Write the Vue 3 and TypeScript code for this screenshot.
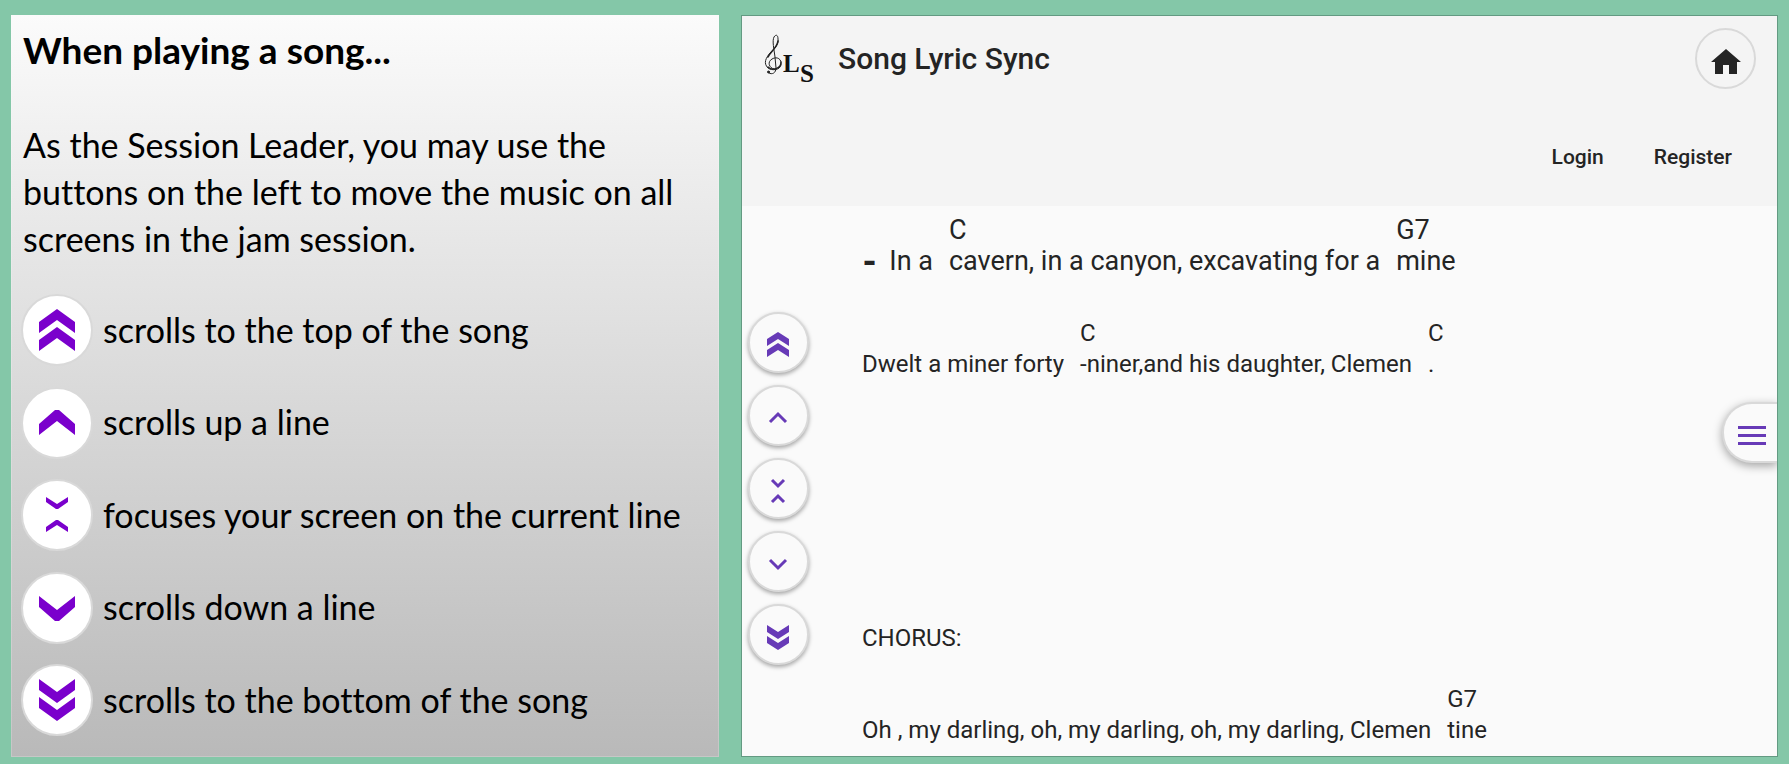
<script setup lang="ts">
interface Control {
  id: string
  label: string
  large: string
  small: string
  thin: boolean
}

interface Segment {
  chord?: string
  text: string
}

interface Line {
  id: string
  kind: string
  segments: Segment[]
}

const controls: Control[] = [
  {
    id: 'top',
    label: 'scrolls to the top of the song',
    large: 'M0-21 18-8V3L0-10-18 3V-8ZM0-3 18 10V21L0 8-18 21V10Z',
    small: 'M0-10 11-3V4L0-3-11 4V-3ZM0 1 11 8V15L0 8-11 15V8Z',
    thin: false,
  },
  {
    id: 'up',
    label: 'scrolls up a line',
    large: 'M-2-13H2L18 1V12L0-2-18 12V1Z',
    small: 'M-8 7 0-1 8 7',
    thin: true,
  },
  {
    id: 'focus',
    label: 'focuses your screen on the current line',
    large: 'M-11-18 0-11 11-18V-13L1-6H-1L-11-13ZM-1 5H1L11 12V17L0 10-11 17V12Z',
    small: 'M-6-8 0-2 6-8M-6 14 0 8 6 14',
    thin: true,
  },
  {
    id: 'down',
    label: 'scrolls down a line',
    large: 'M-18-12 0 2 18-12V-1L2 13H-2L-18-1Z',
    small: 'M-8-1 0 7 8-1',
    thin: true,
  },
  {
    id: 'bottom',
    label: 'scrolls to the bottom of the song',
    large: 'M-18-21 0-8 18-21V-10L0 3-18-10ZM-18-3 0 10 18-3V8L0 21-18 8Z',
    small: 'M-11-9 0-2 11-9V-2L0 5-11-2ZM-11 2 0 9 11 2V9L0 16-11 9Z',
    thin: false,
  },
]

const lines: Line[] = [
  {
    id: 'cavern',
    kind: 'current',
    segments: [
      { text: 'In a' },
      { chord: 'C', text: 'cavern, in a canyon, excavating for a' },
      { chord: 'G7', text: 'mine' },
    ],
  },
  {
    id: 'miner',
    kind: 'verse',
    segments: [
      { text: 'Dwelt a miner forty' },
      { chord: 'C', text: '-niner,and his daughter, Clemen' },
      { chord: 'C', text: '.' },
    ],
  },
  { id: 'chorus', kind: 'section', segments: [{ text: 'CHORUS:' }] },
  {
    id: 'darling',
    kind: 'verse',
    segments: [
      { text: 'Oh , my darling, oh, my darling, oh, my darling, Clemen' },
      { chord: 'G7', text: 'tine' },
    ],
  },
]
</script>

<template>
  <div class="page">
    <section class="guide">
      <h1>When playing a song...</h1>
      <p class="intro">
        As the Session Leader, you may use the buttons on the left to move the music on all screens in the jam session.
      </p>
      <ul class="legend">
        <li v-for="c in controls" :key="c.id">
          <span class="badge">
            <svg viewBox="-34 -34 68 68" aria-hidden="true"><path :d="c.large" /></svg>
          </span>
          <span>{{ c.label }}</span>
        </li>
      </ul>
    </section>

    <section class="player">
      <header>
        <div class="brand-row">
          <a class="brand" href="#">
            <svg class="logo" viewBox="0 0 54 60" aria-hidden="true">
              <g fill="none" stroke="#222" stroke-linecap="round" transform="translate(1 3)">
                <path stroke-width="1" d="M10 37C5 36 3 30 8 27C13 24 18 27 17 33C16 38 8 39 4 36C-1 31 2 26 6 21C10 17 15 13 14 7C14 3 12 2 10 5C8 9 10 17 11 25L12 36C12 41 8 43 5 41" />
                <path stroke-width="1.6" d="M4 25C7 19 13 16 14 9" />
                <path stroke-width="1.3" d="M17 30C17 37 8 39 4 35" />
                <circle cx="4.500" cy="40" r="1" fill="#222" />
              </g>
              <text x="20" y="43">L</text>
              <text x="37" y="53">S</text>
            </svg>
            <span>Song Lyric Sync</span>
          </a>
          <button class="round home" type="button" aria-label="Home">
            <svg viewBox="-29 -29 57 57" aria-hidden="true">
              <path d="M0-10 15 3H11V15H3V6H-3V15H-11V3H-15Z" />
            </svg>
          </button>
        </div>
        <nav class="account">
          <a href="#">Login</a>
          <a href="#">Register</a>
        </nav>
      </header>

      <div class="stage">
        <div class="scroller">
          <button v-for="c in controls" :key="c.id" class="round" type="button" :aria-label="c.label">
            <svg viewBox="-28 -28 57 57" aria-hidden="true">
              <path :class="{ thin: c.thin }" :d="c.small" />
            </svg>
          </button>
        </div>
        <div class="lyrics">
          <div v-for="line in lines" :key="line.id" class="line" :class="line.kind">
            <b v-if="line.kind === 'current'" class="marker">-</b>
            <span v-for="(s, i) in line.segments" :key="i" class="segment">
              <span v-if="s.chord" class="chord">{{ s.chord }}</span>
              <span>{{ s.text }}</span>
            </span>
          </div>
        </div>
      </div>

      <button class="menu" type="button" aria-label="Menu">
        <svg viewBox="0 0 28 20" aria-hidden="true"><path d="M0 0H28V3H0ZM0 8H28V11H0ZM0 16H28V19H0Z" /></svg>
      </button>
    </section>
  </div>
</template>

<style>
body {
  margin: 0;
}
</style>

<style scoped>
.page {
  box-sizing: border-box;
  min-height: 100vh;
  padding: 15px 11px 7px;
  display: grid;
  grid-template-columns: 708fr 1037fr;
  gap: 22px;
  background: #84c7a8;
}

.guide {
  box-sizing: border-box;
  display: flex;
  flex-direction: column;
  padding: 10px 12px 20px 11px;
  border: 1px solid rgba(255, 255, 255, 0.2);
  background: linear-gradient(#fbfbfb, #b9b9b9) border-box;
  color: #000;
  font: 34px/47px Lato, sans-serif;
  font-variant-ligatures: none;
}

h1 {
  margin: 0 0 48px;
  font-size: 37px;
  line-height: 47px;
  font-weight: 700;
}

.intro {
  margin: 0;
  max-width: 660px;
}

.legend {
  flex: 1;
  display: flex;
  flex-direction: column;
  justify-content: space-between;
  margin: 32px 0 0;
  padding: 0;
  list-style: none;
}

.legend li {
  display: flex;
  align-items: center;
  gap: 10px;
  margin-left: -2px;
}

.legend li > span:last-child {
  padding-bottom: 2px;
}

.badge {
  box-sizing: border-box;
  width: 72px;
  height: 72px;
  border: 2px solid #d9d9d9;
  border-radius: 50%;
  background: #fff;
  display: grid;
  place-items: center;
}

.badge svg {
  width: 68px;
  height: 68px;
  fill: #7a00cc;
}

.player {
  position: relative;
  display: flex;
  flex-direction: column;
  overflow: hidden;
  border: 1px solid #639a82;
  background: #fafafa;
  color: #242424;
  font-family: Roboto, sans-serif;
}

header {
  box-sizing: border-box;
  height: 190px;
  padding: 12px 21px 0;
  background: #f4f4f4;
}

.brand-row {
  display: flex;
  align-items: center;
  justify-content: space-between;
}

.brand {
  display: flex;
  align-items: center;
  gap: 21px;
  color: inherit;
  text-decoration: none;
  font-size: 30px;
  line-height: 40px;
  font-weight: 500;
}

.logo {
  width: 54px;
  height: 60px;
}

.logo text {
  font: 700 25px "Liberation Serif", serif;
  fill: #111;
}

.round {
  box-sizing: border-box;
  width: 61px;
  height: 61px;
  padding: 0;
  border: 2px solid #d9d9d9;
  border-radius: 50%;
  background: #fafafa;
  display: grid;
  place-items: center;
  box-shadow: 0 2px 4px rgba(0, 0, 0, 0.35);
}

.round svg {
  width: 57px;
  height: 57px;
  fill: #673ab7;
}

.round .thin {
  fill: none;
  stroke: #673ab7;
  stroke-width: 3;
}

.home {
  background: transparent;
  box-shadow: none;
}

.home svg {
  fill: #242424;
}

.account {
  display: flex;
  justify-content: flex-end;
  gap: 50px;
  margin-top: 53px;
  padding-right: 24px;
  font-size: 21px;
  line-height: 30px;
  font-weight: 500;
}

.account a {
  color: inherit;
  text-decoration: none;
}

.stage {
  flex: 1;
  display: flex;
  gap: 53px;
  padding: 9px 6px 0;
}

.scroller {
  display: flex;
  flex-direction: column;
  gap: 12px;
  margin-top: 97px;
}

.lyrics {
  flex: 1;
  font-size: 24px;
  line-height: 31px;
}

.line {
  display: flex;
  align-items: flex-end;
  gap: 16px;
  height: 62px;
}

.line + .line {
  margin-top: 41px;
}

.line.section {
  height: 31px;
  margin-top: 243px;
}

.line.section + .line {
  margin-top: 30px;
}

.current {
  font-size: 27px;
}

.marker {
  margin-right: -4px;
  font-size: 34px;
  font-weight: 900;
}

.segment {
  display: flex;
  flex-direction: column;
  white-space: nowrap;
}

.menu {
  position: absolute;
  right: 0;
  top: 386px;
  width: 55px;
  height: 61px;
  padding: 7px 0 0 2px;
  border: 2px solid #d9d9d9;
  border-right: 0;
  border-radius: 30px 0 0 30px;
  background: #fafafa;
  display: grid;
  place-items: center;
  box-shadow: 0 3px 10px rgba(0, 0, 0, 0.35);
}

.menu svg {
  width: 28px;
  height: 20px;
  fill: #673ab7;
}
</style>
